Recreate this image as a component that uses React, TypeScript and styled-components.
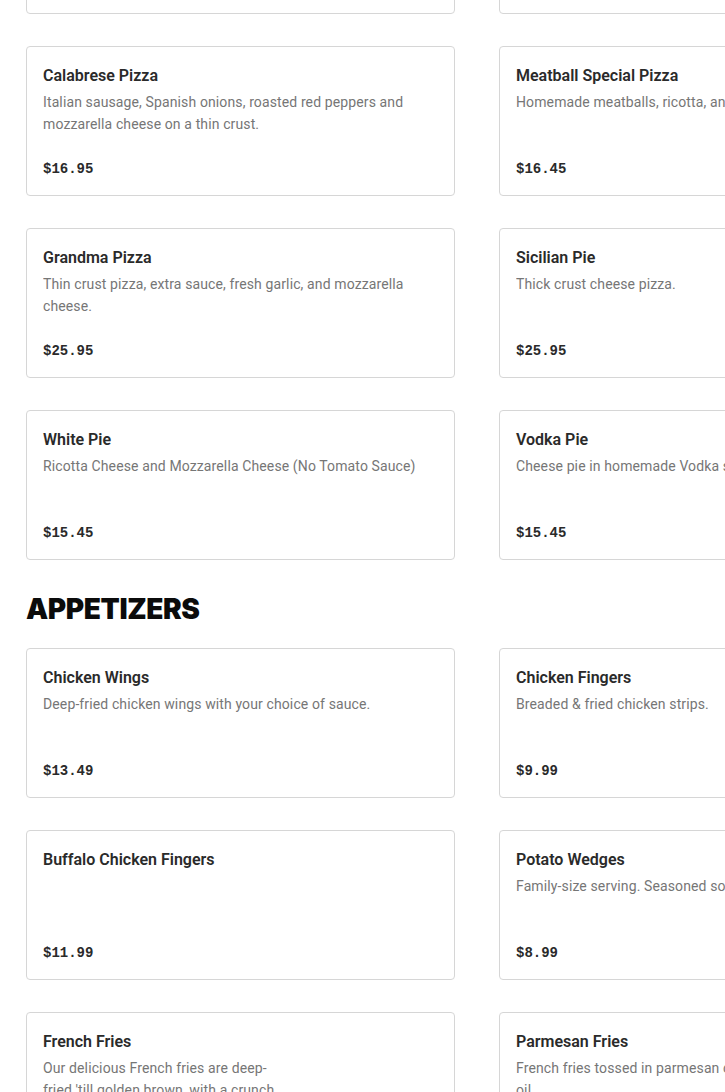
import React from "react";
import styled, { createGlobalStyle } from "styled-components";

const Global = createGlobalStyle`
  html, body {
    margin: 0;
    padding: 0;
    background: #ffffff;
    overflow: hidden;
  }
  body {
    font-family: Roboto, "Liberation Sans", Arial, sans-serif;
    -webkit-font-smoothing: antialiased;
  }
`;

const Page = styled.main`
  padding: 0 0 0 26px;
  margin-top: -136px;
  width: 1100px;
`;

const Section = styled.section`
  display: flex;
  flex-direction: column;
`;

const SectionTitle = styled.h2`
  margin: 31px 0 21px;
  font-family: Inter, "Liberation Sans", Arial, sans-serif;
  font-weight: 900;
  font-size: 28px;
  line-height: 36px;
  letter-spacing: -0.4px;
  color: #0b0b0b;
  text-transform: uppercase;
`;

const Grid = styled.div`
  display: grid;
  grid-template-columns: repeat(2, 429px);
  column-gap: 44px;
  row-gap: 32px;
`;

const Card = styled.article`
  box-sizing: border-box;
  height: 150px;
  border: 1px solid #d6d6d6;
  border-radius: 4px;
  padding: 17px 16px 15px;
  display: flex;
  flex-direction: column;
  background: #fff;
`;

const Title = styled.h3`
  margin: 0;
  font-size: 16px;
  line-height: 24px;
  font-weight: 600;
  color: #2a2a2a;
`;

const Desc = styled.p<{ $narrow?: boolean }>`
  margin: 3px 0 0;
  font-size: 14px;
  line-height: 22px;
  letter-spacing: 0.12px;
  color: #767676;
  max-width: ${(p) => (p.$narrow ? "245px" : "none")};
  display: -webkit-box;
  -webkit-line-clamp: 2;
  -webkit-box-orient: vertical;
  overflow: hidden;
`;

const Price = styled.div`
  margin-top: auto;
  font-family: "Liberation Mono", "DejaVu Sans Mono", monospace;
  font-weight: 700;
  font-size: 14px;
  line-height: 22px;
  color: #2a2a2a;
`;

type Item = { name: string; desc?: string; price: string; narrow?: boolean };

const pizzas: Item[] = [
  { name: "Margherita Pizza", desc: "Fresh mozzarella, basil and tomato sauce.", price: "$15.95" },
  { name: "Buffalo Chicken Pizza", desc: "Buffalo chicken and mozzarella cheese.", price: "$16.95" },
  {
    name: "Calabrese Pizza",
    desc: "Italian sausage, Spanish onions, roasted red peppers and mozzarella cheese on a thin crust.",
    price: "$16.95",
  },
  {
    name: "Meatball Special Pizza",
    desc: "Homemade meatballs, ricotta, and mozzarella cheese.",
    price: "$16.45",
  },
  {
    name: "Grandma Pizza",
    desc: "Thin crust pizza, extra sauce, fresh garlic, and mozzarella cheese.",
    price: "$25.95",
  },
  { name: "Sicilian Pie", desc: "Thick crust cheese pizza.", price: "$25.95" },
  { name: "White Pie", desc: "Ricotta Cheese and Mozzarella Cheese (No Tomato Sauce)", price: "$15.45" },
  { name: "Vodka Pie", desc: "Cheese pie in homemade Vodka sauce.", price: "$15.45" },
];

const appetizers: Item[] = [
  { name: "Chicken Wings", desc: "Deep-fried chicken wings with your choice of sauce.", price: "$13.49" },
  { name: "Chicken Fingers", desc: "Breaded & fried chicken strips.", price: "$9.99" },
  { name: "Buffalo Chicken Fingers", price: "$11.99" },
  { name: "Potato Wedges", desc: "Family-size serving. Seasoned so good.", price: "$8.99" },
  {
    name: "French Fries",
    desc: "Our delicious French fries are deep-fried 'till golden brown, with a crunch, and a soft inside.",
    price: "$6.99",
    narrow: true,
  },
  {
    name: "Parmesan Fries",
    desc: "French fries tossed in parmesan cheese, herbs & fresh garlic oil",
    price: "$8.49",
  },
];

function MenuCard({ item }: { item: Item }) {
  return (
    <Card>
      <Title>{item.name}</Title>
      {item.desc ? <Desc $narrow={item.narrow}>{item.desc}</Desc> : null}
      <Price>{item.price}</Price>
    </Card>
  );
}

export default function App() {
  return (
    <>
      <Global />
      <Page>
        <Section>
          <Grid>
            {pizzas.map((it) => (
              <MenuCard key={it.name} item={it} />
            ))}
          </Grid>
        </Section>
        <Section>
          <SectionTitle>Appetizers</SectionTitle>
          <Grid>
            {appetizers.map((it) => (
              <MenuCard key={it.name} item={it} />
            ))}
          </Grid>
        </Section>
      </Page>
    </>
  );
}
